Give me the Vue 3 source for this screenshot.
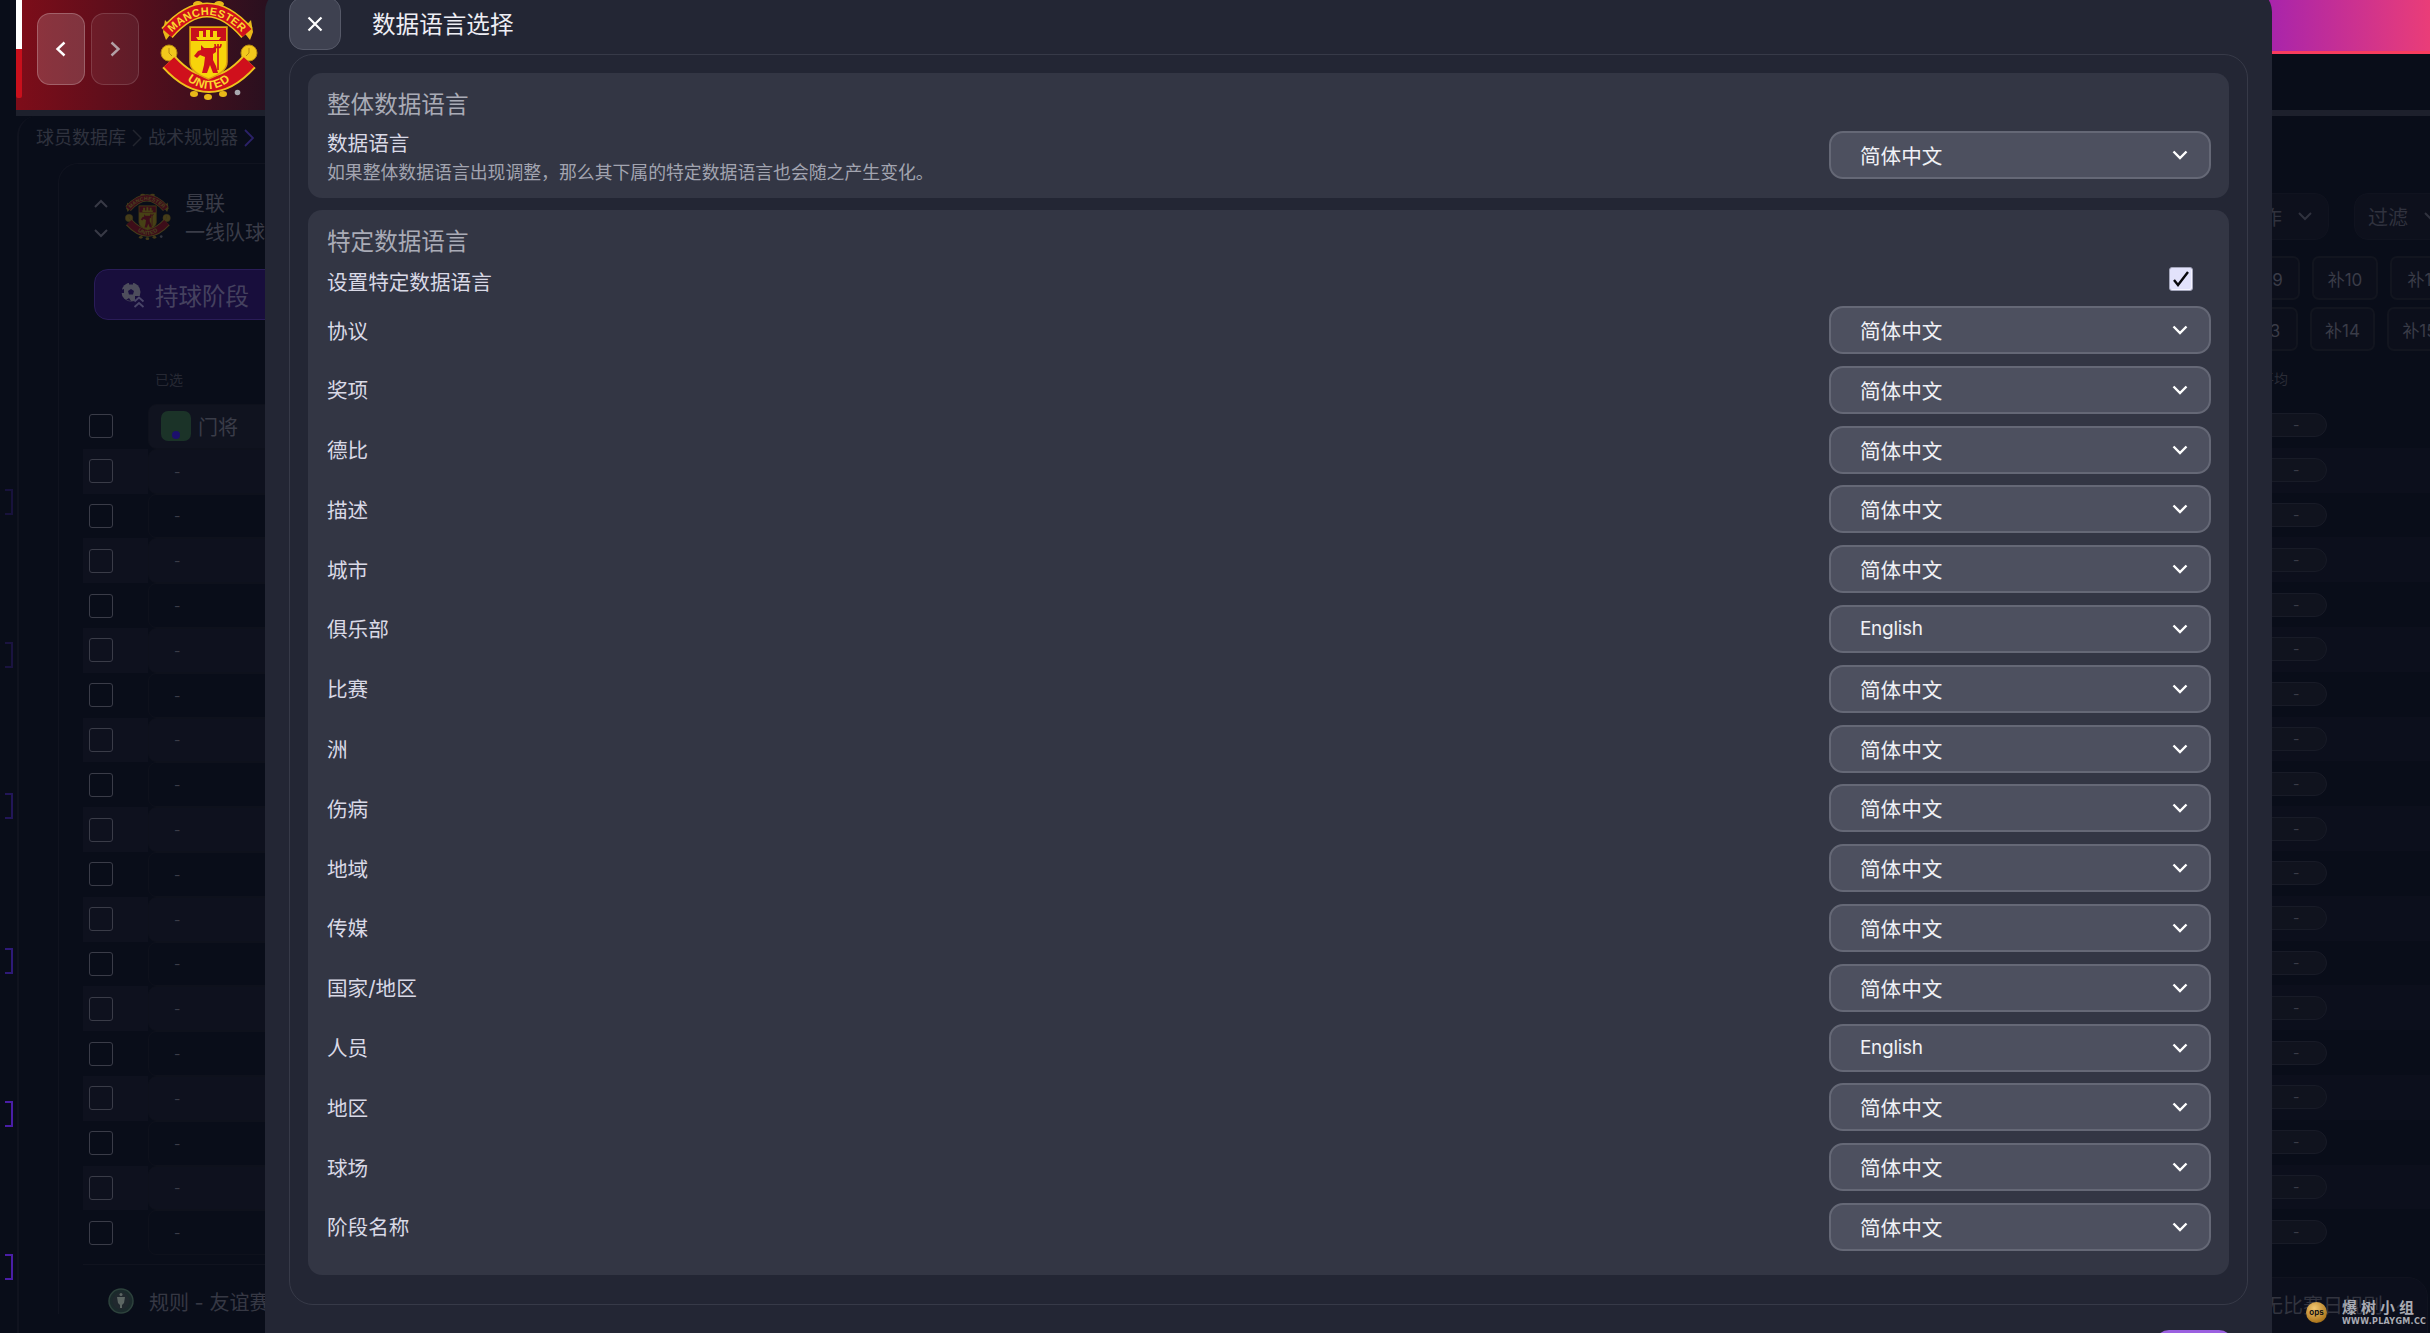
<script setup>
import { ref } from 'vue';

// language rows of the "specific data language" panel
const languageRows = ref([
  { label: '协议', value: '简体中文' },
  { label: '奖项', value: '简体中文' },
  { label: '德比', value: '简体中文' },
  { label: '描述', value: '简体中文' },
  { label: '城市', value: '简体中文' },
  { label: '俱乐部', value: 'English' },
  { label: '比赛', value: '简体中文' },
  { label: '洲', value: '简体中文' },
  { label: '伤病', value: '简体中文' },
  { label: '地域', value: '简体中文' },
  { label: '传媒', value: '简体中文' },
  { label: '国家/地区', value: '简体中文' },
  { label: '人员', value: 'English' },
  { label: '地区', value: '简体中文' },
  { label: '球场', value: '简体中文' },
  { label: '阶段名称', value: '简体中文' },
]);

// rows of the dimmed table behind the dialog
const playerRows = Array.from({ length: 19 }, (_, i) => i);

// purple markers on the far left edge, y in px inside the workspace
const brackets = [
  { top: 373, color: '#18123c' },
  { top: 526, color: '#1a1340' },
  { top: 677, color: '#221658' },
  { top: 832, color: '#2e1a78' },
  { top: 985, color: '#4a1ea6' },
  { top: 1138, color: '#4a1ea6' },
];
</script>

<template>
  <div class="page">
    <header class="topbar">
      <div class="brand">
        <div class="stripe"><span class="stripe-white"></span><span class="stripe-red"></span></div>
        <button class="nav-btn active">
          <svg width="14" height="18" viewBox="0 0 14 18"><path d="M10.500 2.500 3.500 9l7 6.500" fill="none" stroke="#fff" stroke-width="2.400" /></svg>
        </button>
        <button class="nav-btn">
          <svg width="14" height="18" viewBox="0 0 14 18"><path d="M3.500 2.500 10.500 9l-7 6.500" fill="none" stroke="#b3a0a6" stroke-width="2.400" /></svg>
        </button>
        <svg class="crest" viewBox="0 0 130 110" width="130" height="110">
          <defs>
            <g id="mu-crest">
              <ellipse cx="59" cy="4" rx="5" ry="3" fill="#e8b818" />
              <ellipse cx="80" cy="4" rx="5" ry="3" fill="#e8b818" />
              <ellipse cx="55" cy="94" rx="4" ry="3" fill="#e8b818" />
              <ellipse cx="69" cy="97" rx="4" ry="3" fill="#e8b818" />
              <ellipse cx="84" cy="94" rx="4" ry="3" fill="#e8b818" />
              <path d="M26 20 35 30 27 40 24 32Z" fill="#e8b818" />
              <path d="M112 20 103 30 111 40 114 32Z" fill="#e8b818" />
              <path d="M28 33Q68 -13 108 33" fill="none" stroke="#edc21c" stroke-width="15" />
              <path d="M28 33Q68 -13 108 33" fill="none" stroke="#d0101c" stroke-width="12" />
              <path id="mu-top-text" d="M28 38Q68 -8 108 38" fill="none" />
              <text font-family="Liberation Sans, sans-serif" font-weight="700" font-size="11" fill="#fbd62e" letter-spacing=".3">
                <textPath href="#mu-top-text" startOffset="50%" text-anchor="middle">MANCHESTER</textPath>
              </text>
              <circle cx="30" cy="53" r="8" fill="#f2c81c" stroke="#b88a10" stroke-width="1" />
              <circle cx="110" cy="53" r="8" fill="#f2c81c" stroke="#b88a10" stroke-width="1" />
              <path d="M30 48v5l3 3M110 48v5l-3 3" fill="none" stroke="#a87a10" stroke-width=".800" />
              <path d="M30 62Q70 106 110 62" fill="none" stroke="#edc21c" stroke-width="18" />
              <path d="M30 62Q70 106 110 62" fill="none" stroke="#d0101c" stroke-width="14" />
              <path id="mu-bottom-text" d="M36 68Q70 110 104 68" fill="none" />
              <text font-family="Liberation Sans, sans-serif" font-weight="700" font-size="12" fill="#fbd62e" letter-spacing=".6">
                <textPath href="#mu-bottom-text" startOffset="50%" text-anchor="middle">UNITED</textPath>
              </text>
              <path d="M51 27H88V62Q88 72 69.500 79 51 72 51 62Z" fill="#f7d40a" stroke="#e0a010" stroke-width="1.500" />
              <rect x="52" y="28" width="35" height="13" fill="#c8101c" />
              <path d="M57 37h25l-2 3H59ZM60 31h4v6h-4ZM67 30h4v7h-4ZM74 31h4v6h-4Z" fill="#f7d40a" />
              <path d="M62 45l3 3h9l3-3v7l-3 2v6l3 6 2 7h-5l-3-8-3 8h-5l2-8 1-8-5-2-3 3-3-2 4-5 3-1Z" fill="#cf101c" />
              <path d="M79 44v26M76 44c0 5 6 5 6 0" fill="none" stroke="#cf101c" stroke-width="1.600" />
              <circle cx="98.500" cy="92.500" r="2.800" fill="#a9a9b0" />
            </g>
          </defs>
          <use href="#mu-crest" />
        </svg>
      </div>
      <div class="accent"></div>
    </header>

    <main class="workspace">
      <section class="left-col">
        <nav class="breadcrumb">
          <span>球员数据库</span>
          <svg class="crumb-sep" width="10" height="18" viewBox="0 0 10 18"><path d="M1 1l8 8-8 8" fill="none" stroke="#22252f" stroke-width="1.500" /></svg>
          <span>战术规划器</span>
          <svg class="crumb-sep" width="10" height="18" viewBox="0 0 10 18"><path d="M1 1l8 8-8 8" fill="none" stroke="#2b2168" stroke-width="1.800" /></svg>
        </nav>
        <div class="inner">
          <div class="team-row">
            <div class="team-arrows">
              <svg width="14" height="9" viewBox="0 0 14 9"><path d="M1 8l6-6 6 6" fill="none" stroke="#383a46" stroke-width="2" /></svg>
              <svg width="14" height="9" viewBox="0 0 14 9"><path d="M1 1l6 6 6-6" fill="none" stroke="#383a46" stroke-width="2" /></svg>
            </div>
            <svg class="team-crest" viewBox="0 0 130 110" width="61" height="52"><use href="#mu-crest" /></svg>
            <div class="team-name"><span>曼联</span><span>一线队球员</span></div>
          </div>
          <div class="phase-btn">
            <svg width="24" height="26" viewBox="0 0 24 26">
              <circle cx="10" cy="10" r="9.500" fill="#4d4d5c" />
              <path d="M10 7l3 2-1 3.500H8L7 9Z" fill="#1a1040" />
              <path d="M0 8l3-1v4l-3 0ZM8 0h4v2.500H8ZM5 18l3-2 2 3Z" fill="#180e3c" />
              <path d="M12 20h12v6H12Z M14 14h10v6H14Z" fill="#180e3c" />
              <path d="M13.500 19.500l4.500-4 4.500 4M13.500 25l4.500-4 4.500 4" fill="none" stroke="#4a4668" stroke-width="1.800" />
            </svg>
            <span>持球阶段</span>
          </div>
          <div class="selected-label">已选</div>
          <div class="rows">
            <div v-for="i in playerRows" :key="i" class="row" :class="{ striped: i % 2 === 1 }">
              <div class="check-cell"><span class="ghost-check"></span></div>
              <div class="value-cell" :class="{ first: i === 0 }">
                <template v-if="i === 0">
                  <span class="pos-icon"><span class="pos-dot"></span></span>
                  <span class="pos-name">门将</span>
                </template>
                <span v-else class="dash">-</span>
              </div>
            </div>
            <div class="rows-end"></div>
          </div>
          <div class="rule-row">
            <svg width="26" height="26" viewBox="0 0 26 26">
              <circle cx="13" cy="13" r="12" fill="#1b2a2c" stroke="#2d423c" stroke-width="1.500" />
              <circle cx="13" cy="13" r="8.500" fill="#20282e" />
              <path d="M9 9h8l-1 6-2 2v3h-2v-3l-2-2Z" fill="#5c6663" />
              <circle cx="13" cy="6.500" r="1.500" fill="#5c6663" />
            </svg>
            <span>规则 - 友谊赛</span>
          </div>
        </div>
      </section>

      <section class="right-col">
        <div class="filter-row">
          <div class="filter-btn action">
            <span>操作</span>
            <svg width="14" height="9" viewBox="0 0 14 9"><path d="M1 1l6 6 6-6" fill="none" stroke="#30323e" stroke-width="2" /></svg>
          </div>
          <div class="filter-btn wide">
            <span>过滤</span>
            <svg width="14" height="9" viewBox="0 0 14 9"><path d="M1 1l6 6 6-6" fill="none" stroke="#30323e" stroke-width="2" /></svg>
          </div>
        </div>
        <div class="chips first-chips">
          <span class="chip c9">补9</span><span class="chip c10">补10</span><span class="chip c10">补11</span>
        </div>
        <div class="chips second-chips">
          <span class="chip c13">补13</span><span class="chip c14">补14</span><span class="chip c14">补15</span>
        </div>
        <div class="avg-label">平均</div>
        <div class="rows">
          <div v-for="i in playerRows" :key="i" class="pill-row" :class="{ striped: i % 2 === 1 }">
            <span class="pill">-</span>
          </div>
        </div>
        <div class="bottom-panel">
          <span>无比赛日规则</span>
          <svg width="14" height="9" viewBox="0 0 14 9"><path d="M1 8l6-6 6 6" fill="none" stroke="#262833" stroke-width="2" /></svg>
        </div>
      </section>

      <span
        v-for="b in brackets"
        :key="b.top"
        class="bracket"
        :style="{ top: b.top + 'px', borderColor: b.color }"
      ></span>
    </main>

    <!-- dialog -->
    <div class="modal">
      <div class="modal-head">
        <button class="close-btn">
          <svg width="16" height="16" viewBox="0 0 16 16"><path d="M1.500 1.500l13 13M14.500 1.500l-13 13" stroke="#fff" stroke-width="2.200" /></svg>
        </button>
        <h1>数据语言选择</h1>
      </div>
      <div class="frame">
        <section class="panel overall">
          <h2>整体数据语言</h2>
          <div class="overall-row">
            <div>
              <div class="label">数据语言</div>
              <div class="desc">如果整体数据语言出现调整，那么其下属的特定数据语言也会随之产生变化。</div>
            </div>
            <div class="select">
              <span>简体中文</span>
              <svg width="16" height="10" viewBox="0 0 16 10"><path d="M1.500 1.500 8 8l6.500-6.500" fill="none" stroke="#fff" stroke-width="2.400" /></svg>
            </div>
          </div>
        </section>

        <section class="panel specific">
          <h2>特定数据语言</h2>
          <div class="toggle-row">
            <div class="label">设置特定数据语言</div>
            <span class="checkbox">
              <svg width="22" height="22" viewBox="0 0 22 22"><path d="M4 12l4 5L18 4" fill="none" stroke="#08080c" stroke-width="2.400" /></svg>
            </span>
          </div>
          <div class="lang-list">
            <div v-for="row in languageRows" :key="row.label" class="lang-row">
              <div class="label">{{ row.label }}</div>
              <div class="select">
                <span :class="{ latin: row.value === 'English' }">{{ row.value }}</span>
                <svg width="16" height="10" viewBox="0 0 16 10"><path d="M1.500 1.500 8 8l6.500-6.500" fill="none" stroke="#fff" stroke-width="2.400" /></svg>
              </div>
            </div>
          </div>
        </section>
      </div>
      <div class="modal-foot"><button class="confirm-btn"></button></div>
    </div>

    <div class="watermark">
      <span class="ops-ball">ops</span>
      <div class="wm-text">
        <strong>爆树小组</strong>
        <small>WWW.PLAYGM.CC</small>
      </div>
    </div>
  </div>
</template>

<style>
html,
body {
  margin: 0;
  background: #090d19;
  overflow: hidden;
}
</style>

<style scoped>
.page {
  position: relative;
  width: 2430px;
  height: 1333px;
  overflow: hidden;
  display: flex;
  flex-direction: column;
  background: #090d19;
  font-family: Inter, "Noto Sans CJK SC", sans-serif;
}

/* top bar */
.topbar {
  height: 110px;
  margin-left: 16px;
  border-bottom: 6px solid #1d202c;
  display: flex;
  justify-content: space-between;
  flex-shrink: 0;
}
.brand {
  width: 500px;
  display: flex;
  align-items: flex-start;
  background: linear-gradient(90deg, #7e0d19 0, #2a101f 250px, #090d19 480px);
}
.stripe {
  width: 6px;
  display: flex;
  flex-direction: column;
  margin-right: 15px;
}
.stripe-white {
  height: 49px;
  background: #fff;
}
.stripe-red {
  height: 49px;
  background: #c8101c;
  border-radius: 0 0 2px 2px;
}
.nav-btn {
  width: 48px;
  height: 72px;
  margin: 13px 6px 0 0;
  padding: 0;
  display: flex;
  align-items: center;
  justify-content: center;
  border: 1px solid rgba(255, 255, 255, 0.14);
  border-radius: 13px;
  background: rgba(255, 255, 255, 0.06);
}
.nav-btn.active {
  background: rgba(255, 255, 255, 0.16);
  border-color: rgba(255, 255, 255, 0.22);
}
.crest {
  margin-left: -6px;
  flex-shrink: 0;
}
.accent {
  width: 260px;
  height: 51px;
  border-bottom: 3px solid #f83c5e;
  background: linear-gradient(90deg, #7f18c4 0, #9d20b4 72px, #ea3d78 100%);
}

/* dimmed page behind the dialog */
.workspace {
  flex: 1;
  display: flex;
  justify-content: space-between;
  margin-left: 17px;
  border-left: 2px solid #10131f;
  border-radius: 20px 0 0 0;
}
.left-col {
  width: 560px;
  color: #363844;
}
.breadcrumb {
  margin: 10px 0 0 17px;
  height: 24px;
  line-height: 24px;
  font-size: 18px;
  display: flex;
  align-items: center;
  color: #2f323e;
}
.crumb-sep {
  margin: 0 6px;
}
.inner {
  margin: 13px 0 0 39px;
  padding: 31px 0 0 24px;
  border-left: 1px solid #10131f;
  border-top: 1px solid #10131f;
  border-radius: 20px 0 0 0;
}
.team-row {
  display: flex;
  align-items: center;
  height: 46px;
  margin-left: 11px;
}
.team-arrows {
  display: flex;
  flex-direction: column;
  gap: 21px;
  width: 21px;
}
.team-crest {
  opacity: 0.26;
  flex-shrink: 0;
  margin-top: 2px;
}
.team-name {
  display: flex;
  flex-direction: column;
  margin: 2px 0 0 9px;
  font-size: 20px;
  line-height: 29px;
  color: #3a3c48;
}
.phase-btn {
  width: 300px;
  height: 51px;
  margin: 28px 0 0 11px;
  padding-left: 26px;
  box-sizing: border-box;
  display: flex;
  align-items: center;
  gap: 10px;
  background: #180e3c;
  border: 1px solid #2a1c58;
  border-radius: 14px;
  font-size: 23.500px;
  color: #45415f;
}
.selected-label {
  margin: 50px 0 14px 72px;
  height: 20px;
  line-height: 20px;
  font-size: 14px;
  color: #262833;
}
.row {
  height: 44.800px;
  display: flex;
  align-items: stretch;
}
.row.striped .check-cell {
  background: #0e111e;
}
.check-cell {
  width: 65px;
  padding-left: 6px;
  box-sizing: border-box;
  display: flex;
  align-items: center;
}
.ghost-check {
  width: 22px;
  height: 22px;
  border: 1px solid #3a3c48;
  border-radius: 3px;
}
.value-cell {
  flex: 1;
  display: flex;
  align-items: center;
  padding-left: 25px;
  border: 1px solid #0e111c;
  border-radius: 8px;
  box-sizing: border-box;
}
.row.striped .value-cell {
  background: #0e111e;
}
.value-cell.first {
  padding-left: 12px;
  background: #10131f;
  gap: 7px;
}
.pos-icon {
  position: relative;
  width: 30px;
  height: 30px;
  border-radius: 7px;
  background: #1b3328;
}
.pos-dot {
  position: absolute;
  left: 11px;
  bottom: 2px;
  width: 8px;
  height: 8px;
  border-radius: 50%;
  background: #1c0f6c;
}
.pos-name {
  font-size: 20px;
  color: #3a3c48;
}
.dash {
  font-size: 14px;
  color: #3a3c48;
}
.rows-end {
  height: 9px;
  border-bottom: 1px solid #10131f;
}
.rule-row {
  margin: 23px 0 0 25px;
  height: 26px;
  display: flex;
  align-items: center;
  gap: 15px;
  font-size: 20px;
  color: #363844;
}
.right-col {
  width: 230px;
  color: #30323e;
  flex-shrink: 0;
}
.filter-row {
  display: flex;
  gap: 25px;
  margin-top: 77px;
}
.filter-btn {
  height: 47px;
  flex-shrink: 0;
  display: flex;
  align-items: center;
  gap: 16px;
  box-sizing: border-box;
  border: 1px solid #10131f;
  border-radius: 14px;
  background: #0d101c;
  font-size: 20px;
}
.filter-btn.action {
  width: 129px;
  padding-left: 41px;
}
.filter-btn.wide {
  width: 100px;
  padding-left: 13px;
}
.chips {
  display: flex;
  gap: 12px;
  width: 300px;
}
.chip {
  height: 44px;
  flex-shrink: 0;
  display: flex;
  align-items: center;
  justify-content: center;
  box-sizing: border-box;
  border: 2px solid #12151f;
  border-radius: 7px;
  background: #0c0f1b;
  font-size: 17px;
  color: #3a3c48;
}
.first-chips {
  margin: 16px 0 0 38px;
}
.second-chips {
  margin: 7px 0 0 28px;
}
.c9 {
  width: 62px;
}
.c10 {
  width: 66px;
}
.c13 {
  width: 70px;
}
.c14 {
  width: 65px;
}
.avg-label {
  margin: 18px 0 14px 60px;
  height: 20px;
  line-height: 20px;
  font-size: 14px;
  color: #2a2c37;
}
.pill-row {
  height: 44.800px;
  display: flex;
  align-items: center;
}
.pill-row.striped {
  background: #0c0f1c;
}
.pill {
  width: 127px;
  height: 24px;
  padding-left: 92px;
  box-sizing: border-box;
  line-height: 22px;
  border: 1px solid #181b27;
  border-radius: 0 12px 12px 0;
  background: #10131e;
  font-size: 14px;
  color: #3a3c48;
}
.bottom-panel {
  margin: 23px 2px 0 0;
  height: 60px;
  padding: 0 17px 6px 62px;
  display: flex;
  align-items: center;
  justify-content: space-between;
  border: 1px solid #10131f;
  border-radius: 20px 20px 0 0;
  box-sizing: border-box;
  background: #0c0f1c;
  font-size: 20px;
  color: #32343f;
}
.bracket {
  position: absolute;
  left: 5px;
  width: 6px;
  height: 22px;
  margin-top: 116px;
  border: 2px solid;
  border-left: 0;
}

/* dialog */
.modal {
  position: absolute;
  left: 265px;
  top: -12px;
  width: 2007px;
  height: 1400px;
  box-sizing: border-box;
  padding: 9px 24px 0;
  background: #232634;
  border-radius: 24px;
  display: flex;
  flex-direction: column;
}
.modal-head {
  display: flex;
  align-items: center;
  gap: 31px;
  margin-bottom: 4px;
}
.close-btn {
  width: 52px;
  height: 53px;
  padding: 0;
  display: flex;
  align-items: center;
  justify-content: center;
  border: 1px solid #565968;
  border-radius: 14px;
  background: #3e4150;
}
.modal-head h1 {
  margin: 0;
  padding-top: 2px;
  font-size: 23.600px;
  font-weight: 400;
  line-height: 32px;
  color: #eeeef4;
}
.frame {
  width: 1959px;
  height: 1251px;
  padding: 18px;
  box-sizing: border-box;
  display: flex;
  flex-direction: column;
  gap: 12px;
  border: 1px solid #373a48;
  border-radius: 24px;
}
.panel {
  padding: 15.500px 18px 11px 19px;
  background: #333644;
  border-radius: 14px;
}
.panel h2 {
  margin: 0;
  font-size: 23.600px;
  font-weight: 400;
  line-height: 32px;
  color: #a9abb6;
}
.overall-row {
  display: flex;
  justify-content: space-between;
  align-items: flex-start;
  margin-top: 8.500px;
}
.overall-row .select {
  margin-top: 2px;
}
.overall-row .label {
  padding-top: 1px;
}
.label {
  font-size: 20.600px;
  line-height: 28px;
  color: #d9d9e6;
}
.desc {
  margin-top: 1px;
  font-size: 17.850px;
  line-height: 28px;
  color: #a2a4b0;
}
.select {
  width: 382px;
  height: 48px;
  flex-shrink: 0;
  padding: 0 21px 0 29px;
  box-sizing: border-box;
  display: flex;
  align-items: center;
  justify-content: space-between;
  background: #4d505f;
  border: 2px solid #656876;
  border-radius: 14px;
  font-size: 20.600px;
  color: #f0f0f5;
}
.select .latin {
  font-size: 19px;
  letter-spacing: -0.300px;
}
.specific {
  padding: 16px 18px 24.500px 19px;
}
.toggle-row {
  display: flex;
  justify-content: space-between;
  align-items: flex-start;
  height: 28px;
  margin-top: 9px;
  padding-right: 18px;
}
.toggle-row .label {
  padding-top: 2px;
}
.checkbox {
  width: 24px;
  height: 24px;
  box-sizing: border-box;
  display: flex;
  align-items: center;
  justify-content: center;
  background: #e2e2fb;
  border: 1px solid #a3a5ba;
  border-radius: 3px;
  box-shadow: inset -1px -1px 0 #f4f4ff;
}
.lang-list {
  display: flex;
  flex-direction: column;
  gap: 11.800px;
  margin-top: 11px;
}
.lang-row {
  display: flex;
  align-items: center;
  justify-content: space-between;
}
.lang-row .label {
  padding-top: 3px;
}
.modal-foot {
  display: flex;
  justify-content: flex-end;
  margin-top: 25px;
  padding-right: 15px;
}
.confirm-btn {
  width: 78px;
  height: 50px;
  border: 0;
  border-radius: 14px;
  background: #9b60e0;
}

/* forum watermark */
.watermark {
  position: absolute;
  left: 2306px;
  top: 1297px;
  display: flex;
  gap: 15px;
}
.ops-ball {
  width: 21px;
  height: 21px;
  margin-top: 5px;
  border-radius: 50%;
  background: radial-gradient(circle at 40% 30%, #f2c872, #b07a20 70%, #6a4410);
  font-size: 8px;
  font-weight: 700;
  line-height: 21px;
  text-align: center;
  color: #111;
}
.wm-text {
  display: flex;
  flex-direction: column;
  color: #a9abb3;
}
.wm-text strong {
  font-size: 15px;
  line-height: 19px;
  letter-spacing: 4px;
  font-family: "Noto Sans CJK SC", sans-serif;
}
.wm-text small {
  font-size: 8px;
  line-height: 11px;
  font-weight: 700;
  letter-spacing: 0.300px;
  font-family: "DejaVu Sans", sans-serif;
}
</style>
